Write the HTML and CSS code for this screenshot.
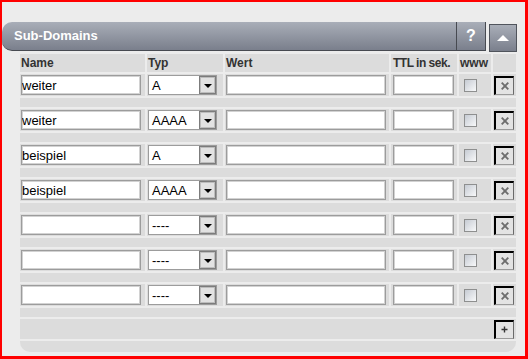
FILE: index.html
```html
<!DOCTYPE html>
<html lang="de">
<head>
    <meta charset="UTF-8">
    <title>Sub-Domains</title>
    <link rel="stylesheet" href="styles.css">
</head>
<body>
    <div class="frame">
        <div class="panel-head">
            <div class="title">Sub-Domains</div>
            <div class="help">?</div>
            <button class="toggle" type="button"><span class="tri"></span></button>
        </div>

        <div class="grid">
            <div class="th">Name</div>
            <div class="th">Typ</div>
            <div class="th">Wert</div>
            <div class="th narrow">TTL in sek.</div>
            <div class="th">www</div>
            <div class="th"></div>

            <!-- row 1 -->
            <div class="td"><input class="txt name" type="text" value="weiter"></div>
            <div class="td"><div class="select"><span>A</span><i class="arrow"></i></div></div>
            <div class="td"><input class="txt wert" type="text"></div>
            <div class="td ttl"><input class="txt ttl-in" type="text"></div>
            <div class="td www"><input class="check" type="checkbox"></div>
            <div class="td"><button class="btn" type="button"><svg width="8" height="8" viewBox="0 0 8 8"><path d="M0.7 0.7L7.3 7.3M7.3 0.7L0.7 7.3" stroke="#6d6d6d" stroke-width="1.9"/></svg></button></div>
            <div class="sep"></div>

            <!-- row 2 -->
            <div class="td"><input class="txt name" type="text" value="weiter"></div>
            <div class="td"><div class="select"><span>AAAA</span><i class="arrow"></i></div></div>
            <div class="td"><input class="txt wert" type="text"></div>
            <div class="td ttl"><input class="txt ttl-in" type="text"></div>
            <div class="td www"><input class="check" type="checkbox"></div>
            <div class="td"><button class="btn" type="button"><svg width="8" height="8" viewBox="0 0 8 8"><path d="M0.7 0.7L7.3 7.3M7.3 0.7L0.7 7.3" stroke="#6d6d6d" stroke-width="1.9"/></svg></button></div>
            <div class="sep"></div>

            <!-- row 3 -->
            <div class="td"><input class="txt name" type="text" value="beispiel"></div>
            <div class="td"><div class="select"><span>A</span><i class="arrow"></i></div></div>
            <div class="td"><input class="txt wert" type="text"></div>
            <div class="td ttl"><input class="txt ttl-in" type="text"></div>
            <div class="td www"><input class="check" type="checkbox"></div>
            <div class="td"><button class="btn" type="button"><svg width="8" height="8" viewBox="0 0 8 8"><path d="M0.7 0.7L7.3 7.3M7.3 0.7L0.7 7.3" stroke="#6d6d6d" stroke-width="1.9"/></svg></button></div>
            <div class="sep"></div>

            <!-- row 4 -->
            <div class="td"><input class="txt name" type="text" value="beispiel"></div>
            <div class="td"><div class="select"><span>AAAA</span><i class="arrow"></i></div></div>
            <div class="td"><input class="txt wert" type="text"></div>
            <div class="td ttl"><input class="txt ttl-in" type="text"></div>
            <div class="td www"><input class="check" type="checkbox"></div>
            <div class="td"><button class="btn" type="button"><svg width="8" height="8" viewBox="0 0 8 8"><path d="M0.7 0.7L7.3 7.3M7.3 0.7L0.7 7.3" stroke="#6d6d6d" stroke-width="1.9"/></svg></button></div>
            <div class="sep"></div>

            <!-- row 5 -->
            <div class="td"><input class="txt name" type="text"></div>
            <div class="td"><div class="select"><span>----</span><i class="arrow"></i></div></div>
            <div class="td"><input class="txt wert" type="text"></div>
            <div class="td ttl"><input class="txt ttl-in" type="text"></div>
            <div class="td www"><input class="check" type="checkbox"></div>
            <div class="td"><button class="btn" type="button"><svg width="8" height="8" viewBox="0 0 8 8"><path d="M0.7 0.7L7.3 7.3M7.3 0.7L0.7 7.3" stroke="#6d6d6d" stroke-width="1.9"/></svg></button></div>
            <div class="sep"></div>

            <!-- row 6 -->
            <div class="td"><input class="txt name" type="text"></div>
            <div class="td"><div class="select"><span>----</span><i class="arrow"></i></div></div>
            <div class="td"><input class="txt wert" type="text"></div>
            <div class="td ttl"><input class="txt ttl-in" type="text"></div>
            <div class="td www"><input class="check" type="checkbox"></div>
            <div class="td"><button class="btn" type="button"><svg width="8" height="8" viewBox="0 0 8 8"><path d="M0.7 0.7L7.3 7.3M7.3 0.7L0.7 7.3" stroke="#6d6d6d" stroke-width="1.9"/></svg></button></div>
            <div class="sep"></div>

            <!-- row 7 -->
            <div class="td"><input class="txt name" type="text"></div>
            <div class="td"><div class="select"><span>----</span><i class="arrow"></i></div></div>
            <div class="td"><input class="txt wert" type="text"></div>
            <div class="td ttl"><input class="txt ttl-in" type="text"></div>
            <div class="td www"><input class="check" type="checkbox"></div>
            <div class="td"><button class="btn" type="button"><svg width="8" height="8" viewBox="0 0 8 8"><path d="M0.7 0.7L7.3 7.3M7.3 0.7L0.7 7.3" stroke="#6d6d6d" stroke-width="1.9"/></svg></button></div>
            <div class="sep"></div>

            <div class="add">
                <button class="btn" type="button"><svg width="7" height="7" viewBox="0 0 7 7"><path d="M3.5 0.5V6.5M0.5 3.5H6.5" stroke="#333" stroke-width="1.4"/></svg></button>
            </div>
            <div class="foot"></div>
        </div>
    </div>
</body>
</html>
```

FILE: styles.css
```css
* {
    box-sizing: border-box;
}
body {
    margin: 0;
    font-family: "Liberation Sans", Arial, sans-serif;
}
.frame {
    width: 528px;
    height: 359px;
    border-style: solid;
    border-color: #ff0000;
    border-width: 2px 3px 3px 2px;
    background-color: #ececec;
    padding-top: 20px;
}
.panel-head {
    display: flex;
    align-items: flex-start;
    height: 29px;
    padding-right: 8px;
}
.title {
    flex: 1;
    height: 29px;
    background: linear-gradient(#a9aeb8, #7a7f8c);
    border-radius: 10px 0 0 10px;
    border-bottom: 1px solid #474a51;
    border-right: 1px solid #474a51;
    color: white;
    font-size: 13px;
    font-weight: bold;
    line-height: 28px;
    padding-left: 12px;
}
.help {
    width: 29px;
    height: 29px;
    background: linear-gradient(#a9aeb8, #7a7f8c);
    border-bottom: 1px solid #474a51;
    border-right: 1px solid #474a51;
    color: white;
    font-size: 16px;
    font-weight: bold;
    line-height: 28px;
    text-align: center;
}
.toggle {
    width: 28px;
    height: 28px;
    margin: 2px 0 0 3px;
    padding: 0;
    border: 1px solid #50545c;
    background: linear-gradient(#a9aeb8, #7a7f8c);
    display: flex;
    align-items: center;
    justify-content: center;
}
.tri {
    width: 0;
    height: 0;
    border-left: 6px solid transparent;
    border-right: 6px solid transparent;
    border-bottom: 6px solid white;
}
.grid {
    display: grid;
    grid-template-columns: 125px 76px 164px 66px 32px 23px;
    gap: 2px;
    margin: 3px 0 0 18px;
    width: 496px;
}
.th {
    background-color: #dcdcdc;
    height: 18px;
    line-height: 18px;
    padding-left: 1px;
    font-size: 12px;
    font-weight: bold;
    color: #333;
    white-space: nowrap;
    overflow: hidden;
}
.th.narrow {
    padding-left: 2px;
    letter-spacing: -0.5px;
}
.td {
    background-color: #dcdcdc;
    height: 22px;
    display: flex;
    align-items: center;
    padding-left: 1px;
}
.td.ttl {
    padding-left: 2px;
}
.td.www {
    padding-left: 5px;
}
.sep {
    grid-column: 1 / -1;
    height: 9px;
    background-color: #dcdcdc;
}
.add {
    grid-column: 1 / -1;
    height: 20px;
    background-color: #dcdcdc;
    display: flex;
    justify-content: flex-end;
    align-items: center;
    padding-right: 2px;
}
.foot {
    grid-column: 1 / -1;
    height: 11px;
    background-color: #dcdcdc;
    border-radius: 0 0 10px 10px;
}
.txt {
    height: 20px;
    margin: 0;
    padding: 0;
    border: 1px solid #9c9c9c;
    box-shadow: inset 0 0 0 1px #d2d2d2;
    background-color: white;
    color: black;
    font-family: "Liberation Sans", Arial, sans-serif;
    font-size: 13px;
    outline: none;
}
.name {
    width: 120px;
}
.wert {
    width: 160px;
}
.ttl-in {
    width: 61px;
}
.select {
    width: 69px;
    height: 20px;
    border: 1px solid #9c9c9c;
    background-color: white;
    display: flex;
    align-items: center;
    justify-content: space-between;
    padding-left: 3px;
    font-size: 13px;
    color: black;
}
.arrow {
    width: 17px;
    height: 18px;
    border: 1px solid #7c7c7c;
    box-shadow: inset 0 0 0 1px #bdbdbd;
    background-color: #e2e2e2;
    display: flex;
    align-items: center;
    justify-content: center;
}
.arrow::after {
    content: "";
    width: 0;
    height: 0;
    border-left: 4px solid transparent;
    border-right: 4px solid transparent;
    border-top: 4px solid black;
    margin-top: 1px;
}
.check {
    appearance: none;
    margin: 0;
    width: 13px;
    height: 13px;
    border: 1px solid #8e8f8f;
    background: linear-gradient(135deg, #c6cbd3, #f8f9fa);
}
.btn {
    width: 20px;
    height: 19px;
    margin: 0;
    padding: 0;
    background-color: #e3e3e3;
    border-style: solid;
    border-width: 2px 1px 1px 2px;
    border-color: #000 #6a6a6a #9a9a9a #000;
    display: flex;
    align-items: center;
    justify-content: center;
}
```
